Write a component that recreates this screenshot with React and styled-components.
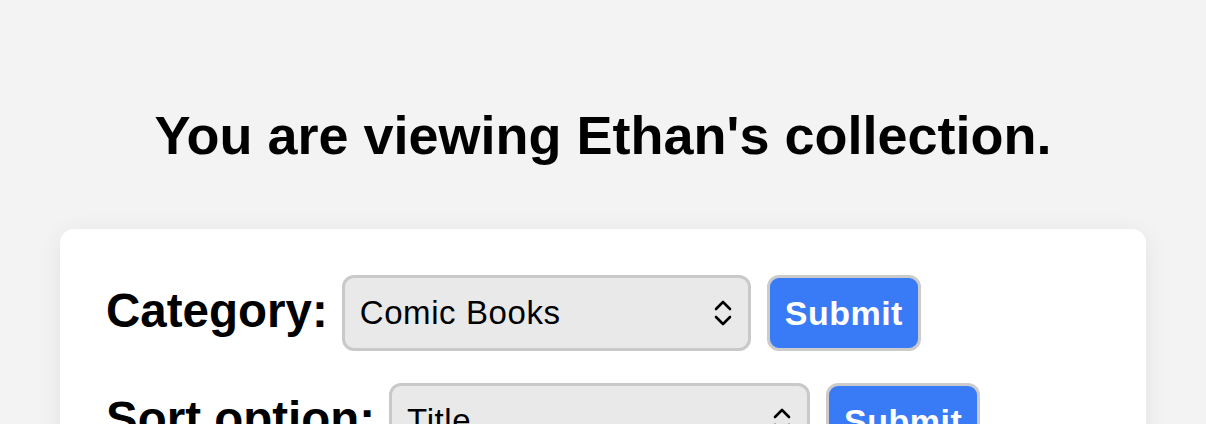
import styled, { createGlobalStyle } from 'styled-components';

const GlobalStyle = createGlobalStyle`
  html, body {
    margin: 0;
    padding: 0;
    background-color: #f3f3f3;
    font-family: 'Liberation Sans', Arial, sans-serif;
    color: #000;
  }
`;

const Page = styled.main`
  padding: 104px 60px 40px;
`;

const Title = styled.h1`
  margin: 0 0 63px;
  text-align: center;
  font-size: 54px;
  font-weight: 700;
  line-height: 62px;
`;

const Card = styled.section`
  background-color: #fff;
  border-radius: 14px;
  box-shadow: 0 4px 24px rgba(0, 0, 0, 0.07);
  padding: 46px 46px 46px;
  display: flex;
  flex-direction: column;
  gap: 32px;
`;

const Row = styled.form`
  display: flex;
  align-items: center;
  gap: 16px;
`;

const Label = styled.label`
  font-size: 47.5px;
  font-weight: 700;
  line-height: 55px;
  margin-right: -2px;
  position: relative;
  top: -3px;
`;

const SelectBox = styled.div`
  box-sizing: border-box;
  width: ${props => props.width}px;
  height: 76px;
  display: flex;
  align-items: center;
  justify-content: space-between;
  padding: 0 15px;
  background-color: #e9e9e9;
  border: 3px solid #c9c9c9;
  border-radius: 12px;
  font-size: 33px;
  letter-spacing: 0.6px;
  cursor: pointer;

  svg {
    flex: none;
  }
`;

const Button = styled.button`
  box-sizing: border-box;
  height: 76px;
  padding: 0 15px;
  background-color: #397bf6;
  border: 3px solid #cbcbcb;
  border-radius: 12px;
  color: #fff;
  font-family: 'Liberation Sans', Arial, sans-serif;
  font-size: 34px;
  font-weight: 700;
  letter-spacing: 0.5px;
  cursor: pointer;
`;

function Chevrons() {
  return (
    <svg width="20" height="28" viewBox="0 0 20 28" fill="none" stroke="#000" strokeWidth="2.6" strokeLinecap="round" strokeLinejoin="round">
      <path d="M3 10 L10 3 L17 10" />
      <path d="M3 18 L10 25 L17 18" />
    </svg>
  );
}

function FilterRow({ label, value, width }) {
  return (
    <Row onSubmit={e => e.preventDefault()}>
      <Label>{label}</Label>
      <SelectBox width={width} role="combobox">
        <span>{value}</span>
        <Chevrons />
      </SelectBox>
      <Button type="submit">Submit</Button>
    </Row>
  );
}

export default function App() {
  return (
    <>
      <GlobalStyle />
      <Page>
        <Title>You are viewing Ethan's collection.</Title>
        <Card>
          <FilterRow label="Category:" value="Comic Books" width={409} />
          <FilterRow label="Sort option:" value="Title" width={421} />
        </Card>
      </Page>
    </>
  );
}
